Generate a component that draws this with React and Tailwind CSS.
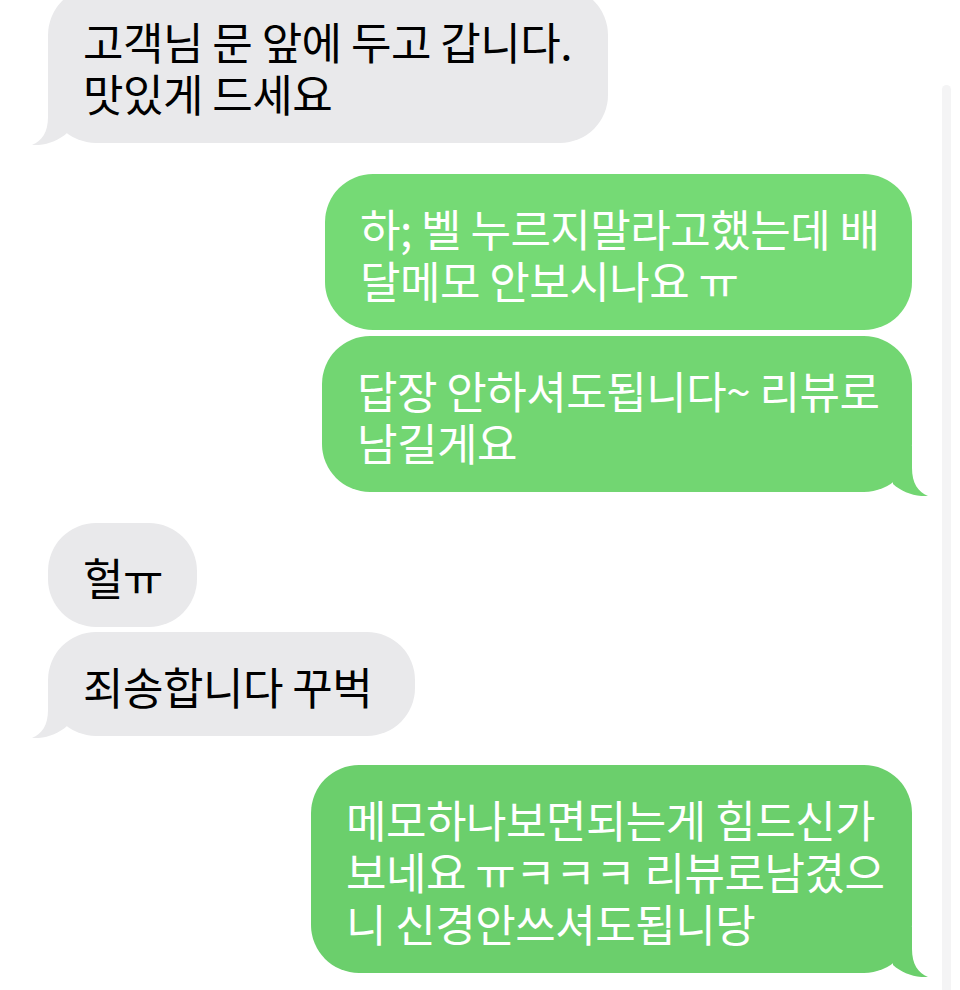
import React from "react";

const font = { fontFamily: '"Noto Sans CJK KR", "Noto Sans", sans-serif' };

// tail drawn at the bottom corner of a bubble
const Tail = ({ side, color }) =>
  side === "left" ? (
    <svg
      className="absolute left-[-16px] bottom-[-2px]"
      width="40"
      height="50"
      viewBox="0 0 40 50"
    >
      <path d="M16 0 L16 22 C16 37 10 46 0 50 C13 51 26 46 35 38 L35 0 Z" fill={color} />
    </svg>
  ) : (
    <svg
      className="absolute right-[-16px] bottom-[-4px]"
      width="40"
      height="50"
      viewBox="0 0 40 50"
    >
      <path d="M24 0 L24 22 C24 37 30 46 40 50 C27 51 14 46 5 38 L5 0 Z" fill={color} />
    </svg>
  );

const Bubble = ({ lines, mine, width, color, tail, className }) => (
  <div
    className={
      "relative rounded-[48px] pt-[28px] pb-[24px] pl-[35px] text-[44px] leading-[52px] tracking-[-0.5px] whitespace-nowrap " +
      (mine ? "self-end text-white " : "self-start text-black ") +
      className
    }
    style={{ width, background: color }}
  >
    <p>
      {lines.map((l, i) => (
        <React.Fragment key={i}>
          {i > 0 && <br />}
          {l}
        </React.Fragment>
      ))}
    </p>
    {tail && <Tail side={mine ? "right" : "left"} color={color} />}
  </div>
);

const GREY = "#e9e9eb";

export default function App() {
  return (
    <div className="w-[960px] h-[990px] overflow-hidden bg-white flex" style={font}>
      <div className="flex-1 flex flex-col pl-[48px] pr-[30px]">
        <Bubble
          className="-mt-[13px]"
          width={560}
          color={GREY}
          tail
          lines={["고객님 문 앞에 두고 갑니다.", "맛있게 드세요"]}
        />
        <Bubble
          mine
          className="mt-[31px]"
          width={587}
          color="#75da75"
          lines={["하; 벨 누르지말라고했는데 배", "달메모 안보시나요 ㅠ"]}
        />
        <Bubble
          mine
          tail
          className="mt-[6px]"
          width={590}
          color="#72d672"
          lines={["답장 안하셔도됩니다~ 리뷰로", "남길게요"]}
        />
        <Bubble className="mt-[31px]" width={149} color={GREY} lines={["헐ㅠ"]} />
        <Bubble
          className="mt-[5px]"
          width={367}
          color={GREY}
          tail
          lines={["죄송합니다 꾸벅"]}
        />
        <Bubble
          mine
          tail
          className="mt-[29px]"
          width={601}
          color="#6bcf6c"
          lines={["메모하나보면되는게 힘드신가", "보네요 ㅠㅋㅋㅋ 리뷰로남겼으", "니 신경안쓰셔도됩니당"]}
        />
      </div>
      <div className="w-[9px] mt-[85px] mr-[9px] bg-[#f4f4f5] rounded-t-full" />
    </div>
  );
}
